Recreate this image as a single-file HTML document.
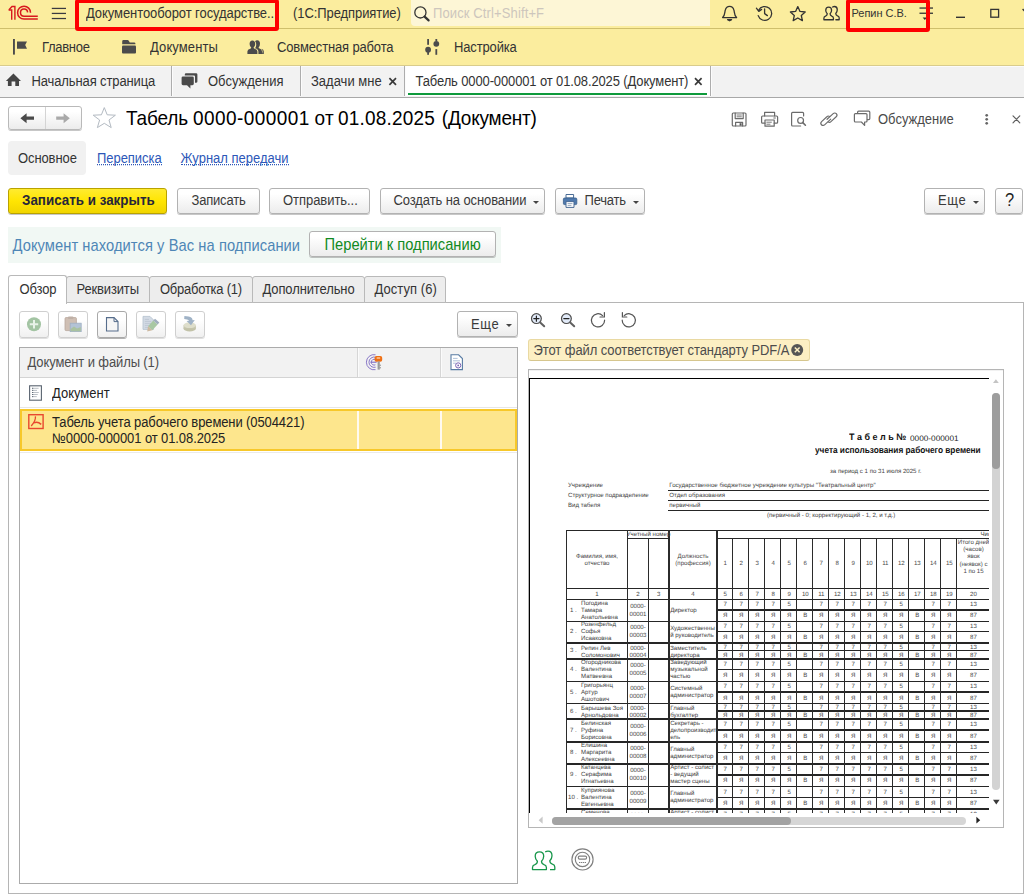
<!DOCTYPE html>
<html lang="ru">
<head>
<meta charset="utf-8">
<title>Табель 0000-000001 от 01.08.2025 (Документ)</title>
<style>
*{box-sizing:border-box;margin:0;padding:0}
html,body{width:1024px;height:894px;overflow:hidden;background:#fff}
body{font-family:"Liberation Sans",sans-serif;font-size:13px;color:#333;position:relative}
.abs{position:absolute}
svg{position:absolute;overflow:visible}
.t{position:absolute;white-space:nowrap;line-height:1;font-size:13px;transform:scaleY(1.07);transform-origin:0 84.6%}
#top{left:0;top:0;width:1024px;height:29px;background:#fbed9e;border-bottom:1px solid #cfbf6c}
#sec{left:0;top:29px;width:1024px;height:36.5px;background:#fbed9e;border-bottom:1px solid #d9cc8c}
#tabs{left:0;top:65.5px;width:1024px;height:32px;background:#f2f2f2;border-bottom:1.5px solid #a8a8a8;border-top:1px solid #fbfbfb}
.redbox{position:absolute;border:4px solid #fe0000;border-radius:3px}
#search{left:411px;top:0;width:299px;height:26px;background:#fdf6d6;border-radius:0 0 0 4px}
.tabsep{position:absolute;top:66px;width:2px;height:30px;background:linear-gradient(90deg,#adadad 50%,#fcfcfc 50%)}
#acttab{left:406px;top:66px;width:304px;height:30px;background:#fff}
#actline{left:408px;top:93px;width:299px;height:2px;background:#0f9a3c}
.btn{position:absolute;height:26px;border:1px solid #b2b2b2;border-radius:3px;background:linear-gradient(#ffffff 20%,#ececec);box-shadow:0 1px 0 rgba(0,0,0,.22)}
.btn .t{top:5.5px;color:#3a3a3a}
.ybtn{background:linear-gradient(#ffeb30,#ffe502 50%,#f1d500);border-color:#b9a200}
.ptab{position:absolute;top:275.5px;height:27.5px;border:1px solid #b9b9b9;background:#ededed;border-radius:3px 3px 0 0}
.ptab .t{top:6px;color:#333}
.sbtn{position:absolute;top:311px;width:30px;height:27px;border:1px solid #cfcfcf;border-radius:3px;background:linear-gradient(#fff 30%,#f0f0f0);box-shadow:0 1px 0 rgba(0,0,0,.12)}
.arr{position:absolute;width:0;height:0;border-left:3px solid transparent;border-right:3px solid transparent;border-top:3px solid #444}
/* pdf */
#page{left:529px;top:378px;width:460px;height:435px;overflow:hidden;background:#fff;text-rendering:geometricPrecision}
#page .p{position:absolute;white-space:nowrap;line-height:1;font-size:6.1px;color:#444}
#page .h{position:absolute;height:1px;background:#262626}
#page .v{position:absolute;width:1px;background:#2b2b2b}
#page .c{position:absolute;white-space:nowrap;line-height:1;font-size:6.1px;color:#484848;text-align:center;transform:translateX(-50%)}
</style>
</head>
<body>
<!-- ===== title bar ===== -->
<div id="top" class="abs"></div>
<div id="sec" class="abs"></div>
<div id="tabs" class="abs"></div>
<div id="search" class="abs"></div>

<!-- 1C logo -->
<svg style="left:0;top:0" width="80" height="29" viewBox="0 0 80 29">
 <g fill="none" stroke="#d8181e" stroke-width="1.4">
  <path d="M9 9.7 L12 6.5 H14.9 V19.8"/>
  <path d="M8.6 10 H11.7 V19.8"/>
  <path d="M30.5 12.7 A6.45 6.45 0 1 0 24.05 19.1 H37.8" stroke-width="1.5"/>
  <path d="M27.6 12.4 A3.55 3.55 0 1 0 24.05 16.2 H37.8" stroke-width="1.5"/>
 </g>
 <g fill="#3a3a40"><rect x="51.8" y="7.8" width="14.2" height="1.25"/><rect x="51.8" y="12.8" width="14.2" height="1.25"/><rect x="51.8" y="17.9" width="14.2" height="1.25"/></g>
</svg>
<div class="t" style="left:86px;top:7px;letter-spacing:-0.08px">Документооборот государстве..</div>
<div class="t" style="left:293px;top:7px;letter-spacing:-0.08px">(1С:Предприятие)</div>
<!-- search -->
<svg style="left:411px;top:0" width="24" height="28" viewBox="0 0 24 28">
 <circle cx="9.4" cy="12.4" r="5.6" fill="none" stroke="#333" stroke-width="1.3"/>
 <path d="M13.6 16.6 L17.6 20.4" stroke="#333" stroke-width="2.2" stroke-linecap="round"/>
</svg>
<div class="t" style="left:433px;top:7px;color:#cdc6bd;letter-spacing:0.12px">Поиск Ctrl+Shift+F</div>
<!-- right icons -->
<svg style="left:716px;top:0" width="130" height="29" viewBox="716 0 130 29" fill="none" stroke="#333" stroke-width="1.3" stroke-linejoin="round" stroke-linecap="round">
 <!-- bell -->
 <path d="M722.6 17.6 C725.2 15.6 724.6 12 725.3 10 C726 7.6 727.8 6.4 729.6 6.4 C731.4 6.4 733.2 7.6 733.9 10 C734.6 12 734 15.6 736.6 17.6 Z"/>
 <path d="M727.6 19.6 H731.6 L729.6 20.8 Z" fill="#333"/>
 <!-- history -->
 <path d="M758.6 10.4 A6.9 6.9 0 1 1 758.2 15.6"/>
 <path d="M756.4 8.2 L758.8 11.4 L761.6 9.4" />
 <path d="M764.6 9 V13.6 L767.4 15.6"/>
 <!-- star -->
 <path d="M797.8 6.6 L800 11.4 L805.2 12 L801.3 15.5 L802.4 20.6 L797.8 18 L793.2 20.6 L794.3 15.5 L790.4 12 L795.6 11.4 Z"/>
 <!-- people -->
 <g transform="translate(823.9 6.5) scale(0.685 0.715) translate(-532.5 -851.1)">
  <path vector-effect="non-scaling-stroke" d="M539.5 851.9 C542.2 851.9 543.7 853.9 543.7 856.3 C543.7 858.5 542.7 860.1 541.5 861.3 C541.5 863.2 542.4 864 544 864.6 C545.8 865.2 546.4 866 546.4 867.4 V869.6 H532.5 V867.4 C532.5 866 533.1 865.2 534.9 864.6 C536.5 864 537.4 863.2 537.4 861.3 C536.2 860.1 535.2 858.5 535.2 856.3 C535.2 853.9 536.8 851.9 539.5 851.9 Z"/>
  <path vector-effect="non-scaling-stroke" d="M545.2 851.8 C546.2 851.3 547.1 851.1 548 851.1 C550.6 851.1 552 853.1 552 855.7 C552 857.9 551 859.6 549.8 860.8 C549.8 862.8 550.8 863.6 552.4 864.2 C554.2 864.8 554.8 865.6 554.8 867 V869.6 H550"/>
 </g>
</svg>
<div class="t" style="left:851.5px;top:8px;font-size:11px;letter-spacing:-0.02px;color:#333">Репин С.В.</div>
<svg style="left:915px;top:0" width="109" height="29" viewBox="915 0 109 29">
 <g fill="#333"><rect x="919.5" y="7.4" width="13.5" height="1.3"/><rect x="919.5" y="12.6" width="13.5" height="1.3"/>
 <path d="M922.6 17.4 H927 L924.8 20 Z"/>
 <rect x="956" y="16.6" width="9" height="1.4"/></g>
 <rect x="990.8" y="9.4" width="7.8" height="7.8" fill="none" stroke="#333" stroke-width="1.3"/>
 <path d="M1022.6 9 L1030 17" stroke="#333" stroke-width="1.3"/>
</svg>
<div class="redbox" style="left:75px;top:-1px;width:204.3px;height:32.3px"></div>
<div class="redbox" style="left:846px;top:-1px;width:83.5px;height:33px"></div>

<!-- ===== sections ===== -->
<svg style="left:0;top:29px" width="520" height="37" viewBox="0 29 520 37" fill="#4b4b4b">
 <!-- flag -->
 <rect x="13" y="39" width="1.9" height="15.6"/>
 <path d="M17 41.4 H27 L25.2 45 L27 48.7 H17 Z"/>
 <!-- folder -->
 <path d="M122.2 44.2 V41.4 Q122.2 40.1 123.5 40.1 H127.6 Q128.4 40.1 128.9 40.9 L129.8 42.4 H134.2 Q135.4 42.4 135.4 43.4 V44.2 Z"/>
 <rect x="122" y="45.6" width="14" height="8" rx="1"/>
 <!-- people solid -->
 <path d="M250 54 H262 V51.4 Q262 49.4 259.6 48.6 Q258.6 48.2 258.6 47.4 Q260 46 260 43.8 Q260 40.2 257.2 40.2 Q255.8 40.2 255.1 41.2 Q256.4 42.6 256.2 45.2 Q256 47 255 48.2 Q258.4 49 258.4 51.6 V54 Z"/>
 <path d="M247.4 54 H257.4 V51.6 Q257.4 49.6 254.6 48.8 Q253.6 48.4 253.6 47.6 Q255.2 46.2 255.2 44 Q255.2 40.4 252.4 40.4 Q249.6 40.4 249.6 44 Q249.6 46.2 251.2 47.6 Q251.2 48.4 250.2 48.8 Q247.4 49.6 247.4 51.6 Z"/>
 <path d="M262 54 H263.8 V51.4 Q263.8 49.6 261.4 48.8 Q262.6 50 262.6 51.6 Z"/>
 <!-- sliders -->
 <rect x="427.2" y="39" width="1.8" height="5.8"/><circle cx="428.1" cy="49.7" r="2.9"/><rect x="427.2" y="52" width="1.8" height="2.8"/>
 <rect x="435.4" y="39" width="1.8" height="2"/><circle cx="436.3" cy="43.8" r="2.9"/><rect x="435.4" y="49.1" width="1.8" height="5.7"/>
</svg>
<div class="t" style="left:42px;top:41px;letter-spacing:-0.3px">Главное</div>
<div class="t" style="left:150px;top:41px;letter-spacing:0.1px">Документы</div>
<div class="t" style="left:277px;top:41px;letter-spacing:-0.15px">Совместная работа</div>
<div class="t" style="left:454px;top:41px;letter-spacing:-0.15px">Настройка</div>

<!-- ===== open tabs ===== -->
<div id="acttab" class="abs"></div>
<div id="actline" class="abs"></div>
<div class="tabsep" style="left:171px"></div>
<div class="tabsep" style="left:299.5px"></div>
<div class="tabsep" style="left:404px"></div>
<div class="tabsep" style="left:710px"></div>
<svg style="left:0;top:66px" width="720" height="31" viewBox="0 66 720 31">
 <!-- home -->
 <path d="M13.45 73.6 L21 80.9 H19 V86 H15.3 V81.4 H11.6 V86 H7.9 V80.9 H5.9 Z" fill="#454545"/>
 <!-- chat -->
 <path d="M186 73.2 H196 Q197.4 73.2 197.4 74.6 V81.4 Q197.4 82.8 196 82.8 H195 V76.4 Q195 75.4 194 75.4 H184.8 V74.6 Q184.8 73.2 186 73.2 Z" fill="#4a4a4a"/>
 <path d="M183 76.4 H192.4 Q193.8 76.4 193.8 77.8 V83.8 Q193.8 85.2 192.4 85.2 H190.4 V88.4 L187 85.2 H183 Q181.6 85.2 181.6 83.8 V77.8 Q181.6 76.4 183 76.4 Z" fill="#4a4a4a"/>
 <!-- close x -->
 <g stroke="#3a3a3a" stroke-width="1.7"><path d="M389.4 78.2 L396 84.8 M396 78.2 L389.4 84.8"/><path d="M695 78.2 L701.6 84.8 M701.6 78.2 L695 84.8"/></g>
</svg>
<div class="t" style="left:31.5px;top:74.5px;letter-spacing:-0.12px">Начальная страница</div>
<div class="t" style="left:208px;top:74.5px">Обсуждения</div>
<div class="t" style="left:311px;top:74.5px">Задачи мне</div>
<div class="t" style="left:415.5px;top:74.5px;letter-spacing:-0.13px">Табель 0000-000001 от 01.08.2025 (Документ)</div>
<!-- ===== form header ===== -->
<div class="btn" style="left:8px;top:106px;width:74px;height:24px;border-color:#b9b9b9"></div>
<div class="abs" style="left:45px;top:107px;width:1px;height:22px;background:#d4d4d4"></div>
<svg style="left:0;top:100px" width="130" height="36" viewBox="0 100 130 36">
 <path d="M20.4 118.2 L26.6 113.2 V116.6 H34 V119.8 H26.6 V123.2 Z" fill="#4a4a4a"/>
 <path d="M69.8 118.2 L63.6 113.2 V116.6 H56.2 V119.8 H63.6 V123.2 Z" fill="#a9a9a9"/>
 <path d="M104.3 107.6 L107.2 114.8 L115.4 115.2 L109 120 L111.2 127.6 L104.3 123.3 L97.4 127.6 L99.6 120 L93.2 115.2 L101.4 114.8 Z" fill="#fff" stroke="#b3bac2" stroke-width="1"/>
</svg>
<div class="t" style="left:126px;top:109px;font-size:19px;color:#000;letter-spacing:-0.15px">Табель</div>
<div class="t" style="left:193px;top:109px;font-size:19px;color:#000;letter-spacing:0.42px">0000-000001</div>
<div class="t" style="left:314.6px;top:109px;font-size:19px;color:#000;letter-spacing:0.3px">от</div>
<div class="t" style="left:338px;top:109px;font-size:19px;color:#000;letter-spacing:0.2px">01.08.2025</div>
<div class="t" style="left:441.8px;top:109px;font-size:19px;color:#000;letter-spacing:-0.2px">(Документ)</div>
<!-- header right icons -->
<svg style="left:725px;top:106px" width="300" height="26" viewBox="725 106 300 26" fill="none" stroke="#6b6b6b" stroke-width="1.2" stroke-linejoin="round" stroke-linecap="round">
 <!-- save -->
 <path d="M732.3 114 Q732.3 113 733.3 113 H745 Q746 113 746 114 V125 Q746 126 745 126 H733.3 Q732.3 126 732.3 125 Z"/>
 <path d="M735.2 113 V118.6 H743.2 V113"/><path d="M737 115 H741.4 M737 116.8 H741.4" stroke-width=".9"/>
 <path d="M735.6 126 V122.4 H742.6 V126"/><rect x="739.6" y="123.2" width="2" height="2.4" fill="#555" stroke="none"/>
 <!-- print -->
 <path d="M764.6 116 V112.4 H774.6 V116"/>
 <path d="M765 123.2 H762.6 Q761.6 123.2 761.6 122.2 V117 Q761.6 116 762.6 116 H776.6 Q777.6 116 777.6 117 V122.2 Q777.6 123.2 776.6 123.2 H774.2"/>
 <path d="M765 120 H774.2 V126.2 H765 Z"/><path d="M766.8 122.2 H771.4 M766.8 124.2 H770" stroke-width=".9"/>
 <path d="M773.8 118 H775.4" stroke-width="1"/>
 <!-- preview -->
 <path d="M800.6 126 H792.6 Q791.6 126 791.6 125 V113.4 Q791.6 112.4 792.6 112.4 H802.6 Q803.6 112.4 803.6 113.4 V116"/>
 <circle cx="800.6" cy="120.4" r="2.9"/><path d="M802.8 122.6 L805.4 125.2" stroke-width="1.6"/>
 <!-- link -->
 <g transform="translate(828.9 119.2) rotate(-43)" stroke-width="1.15"><path d="M1.4 1.2 H-7 A2.2 2.2 0 0 1 -7 -3.2 H0.2 A2.2 2.2 0 0 1 2.4 -1.6"/><path d="M-1.4 -1.2 H7 A2.2 2.2 0 0 1 7 3.2 H-0.2 A2.2 2.2 0 0 1 -2.4 1.6"/></g>
 <!-- discussion -->
 <path d="M857.6 113.4 V112.2 Q857.6 111.2 858.6 111.2 H868.8 Q869.8 111.2 869.8 112.2 V118.6 Q869.8 119.6 868.8 119.6 H867.4"/>
 <path d="M855.4 113.6 H866 Q867 113.6 867 114.6 V121 Q867 122 866 122 H864.6 V125.4 L861.4 122 H855.4 Q854.4 122 854.4 121 V114.6 Q854.4 113.6 855.4 113.6 Z"/>
 <!-- kebab -->
 <g fill="#666" stroke="none"><circle cx="986.7" cy="115.3" r="1.35"/><circle cx="986.7" cy="119.3" r="1.35"/><circle cx="986.7" cy="123.3" r="1.35"/></g>
 <path d="M1013 115.8 L1019.8 122.8 M1019.8 115.8 L1013 122.8" stroke="#5c5c5c" stroke-width="1.15"/>
</svg>
<div class="t" style="left:878px;top:113px;color:#4a4a4a">Обсуждение</div>

<div class="abs" style="left:8px;top:141px;width:78px;height:34px;background:#f1f1f1;border-radius:4px"></div>
<div class="t" style="left:18px;top:152px;color:#333;letter-spacing:-0.1px">Основное</div>
<div class="t" style="left:97px;top:152px;color:#2d57b8;letter-spacing:-0.05px;border-bottom:1px dotted #2d57b8;height:13px">Переписка</div>
<div class="t" style="left:180.5px;top:152px;color:#2d57b8;border-bottom:1px dotted #2d57b8;height:13px">Журнал передачи</div>

<!-- ===== command bar ===== -->
<div class="btn ybtn" style="left:8px;top:187.5px;width:159px;height:26px"><div class="t" style="left:13px;top:5.5px;font-weight:bold;color:#26263a;font-size:13.4px">Записать и закрыть</div></div>
<div class="btn" style="left:177px;top:187.5px;width:82.5px;height:26px"><div class="t" style="left:13.5px;letter-spacing:-0.2px">Записать</div></div>
<div class="btn" style="left:269px;top:187.5px;width:101px;height:26px"><div class="t" style="left:13px;letter-spacing:-0.05px">Отправить...</div></div>
<div class="btn" style="left:379.5px;top:187.5px;width:165.5px;height:26px"><div class="t" style="left:13px;letter-spacing:-0.1px">Создать на основании</div><div class="arr" style="left:152px;top:12px"></div></div>
<div class="btn" style="left:555px;top:187.5px;width:90px;height:26px"><div class="t" style="left:28.5px;letter-spacing:-0.2px">Печать</div><div class="arr" style="left:77px;top:12px"></div>
 <svg style="left:6px;top:4px" width="17" height="16" viewBox="0 0 17 16">
  <path d="M4 1.5 H11.6 V5 H4 Z" fill="#fff" stroke="#4a6c96" stroke-width="1"/>
  <rect x="1.4" y="5" width="13.4" height="6.6" rx="1.2" fill="#4f79ad" stroke="#3a5f8c" stroke-width=".8"/>
  <path d="M4 8.6 H12 V14.4 H4 Z" fill="#fff" stroke="#4a6c96" stroke-width="1"/>
  <path d="M5.6 10.6 H10.4 M5.6 12.4 H9.4" stroke="#7d93ad" stroke-width=".8"/>
 </svg>
</div>
<div class="btn" style="left:924px;top:187.5px;width:61px;height:26px"><div class="t" style="left:13px;letter-spacing:0.7px">Еще</div><div class="arr" style="left:47.5px;top:12px"></div></div>
<div class="btn" style="left:994.5px;top:187.5px;width:28.5px;height:26px"><div class="t" style="left:9.5px;top:3px;font-size:16.5px;color:#222">?</div></div>

<!-- ===== status ===== -->
<div class="abs" style="left:8px;top:227px;width:493px;height:36px;background:#f1f8f4"></div>
<div class="t" style="left:12.5px;top:238.5px;font-size:14.7px;color:#4e86b6;letter-spacing:0.07px">Документ находится у Вас на подписании</div>
<div class="btn" style="left:308.5px;top:231px;width:187px;height:26px"><div class="t" style="left:15px;top:5.5px;font-size:14.7px;color:#118a22">Перейти к подписанию</div></div>
<!-- ===== page tabs & panel ===== -->
<div class="abs" style="left:8px;top:302px;width:1016px;height:592px;border:1px solid #b5b5b5;background:#fff"></div>
<div class="ptab" style="left:66px;width:84px"><div class="t" style="left:9.5px;letter-spacing:-0.15px">Реквизиты</div></div>
<div class="ptab" style="left:149px;width:104px"><div class="t" style="left:10px;letter-spacing:-0.25px">Обработка (1)</div></div>
<div class="ptab" style="left:252px;width:113px"><div class="t" style="left:9.5px;letter-spacing:-0.12px">Дополнительно</div></div>
<div class="ptab" style="left:364px;width:82px"><div class="t" style="left:9.5px;letter-spacing:0.05px">Доступ (6)</div></div>
<div class="ptab" style="left:8px;top:275px;width:59px;height:29px;background:#fff;border-bottom:none"><div class="t" style="top:7px;left:10.5px;color:#333;letter-spacing:-0.15px">Обзор</div></div>

<!-- ===== left pane toolbar ===== -->
<div class="sbtn" style="left:19px;width:30px"></div>
<div class="sbtn" style="left:58px"></div>
<div class="sbtn" style="left:97px;border-color:#a9a9a9;box-shadow:0 1px 0 rgba(0,0,0,.3)"></div>
<div class="sbtn" style="left:136px"></div>
<div class="sbtn" style="left:175px"></div>
<svg style="left:19px;top:311px" width="190" height="27" viewBox="19 311 190 27">
 <!-- add -->
 <circle cx="34" cy="324.2" r="7" fill="#a3c4a3"/><path d="M34 320 V328.4 M29.8 324.2 H38.2" stroke="#e9f2e9" stroke-width="2"/>
 <!-- clipboard + picture -->
 <rect x="65" y="317.6" width="11.4" height="13" rx="1" fill="#cfbfb4" stroke="#b8a79c" stroke-width=".8"/>
 <rect x="68" y="316.4" width="5.4" height="2.6" rx=".8" fill="#bfb0a6"/>
 <rect x="70.2" y="323.2" width="11" height="8.4" fill="#b3c3d6" stroke="#9fb0c4" stroke-width=".8"/>
 <path d="M70.6 331.2 V329 L74 326.6 L77 328.6 L80.8 327 V331.2 Z" fill="#a9c2a0"/>
 <!-- new doc -->
 <path d="M106.5 317.6 H114 L118 321.6 V331 H106.5 Z" fill="#f6f6f6" stroke="#566d8c" stroke-width="1.1"/>
 <path d="M114 317.6 V321.6 H118" fill="none" stroke="#566d8c" stroke-width="1"/>
 <!-- doc + pencil -->
 <path d="M143 316.4 H150 L153.4 319.8 V329.4 H143 Z" fill="#d3dbe5" stroke="#b4c0ce" stroke-width=".8"/>
 <path d="M144.8 319.4 H149 M144.8 321.4 H151.4 M144.8 323.4 H151.4 M144.8 325.4 H149.6 M144.8 327.4 H148" stroke="#b7c2cf" stroke-width=".7"/>
 <path d="M148.05 326.35 L153.3 320.55 L157.6 324.45 L152.35 330.25 Z" fill="#a8c8a3"/>
 <path d="M153.3 320.55 L155.05 318.65 L159.35 322.55 L157.6 324.45 Z" fill="#9fadbd"/>
 <path d="M147.2 331.6 L148.05 326.35 L152.35 330.25 Z" fill="#cdb9a0"/>
 <!-- stamp -->
 <ellipse cx="189.7" cy="328.4" rx="6.2" ry="3" fill="#c2c2a8"/>
 <path d="M183.5 325.2 V328.4 H195.9 V325.2 Z" fill="#c8c8b0"/>
 <ellipse cx="189.7" cy="325.2" rx="6.2" ry="2.9" fill="#dedecb"/>
 <path d="M184.4 316 L188.6 316.6 Q192.4 317.2 192.6 320.2 L194.8 320 L191 325.2 L186.6 321 L189 320.8 Q188.8 319.6 187 319.4 L184.2 319 Z" fill="#9fb2c6"/>
</svg>
<div class="btn" style="left:457px;top:311px;width:61px;height:25.5px"><div class="t" style="left:13px;letter-spacing:0.7px">Еще</div><div class="arr" style="left:47.5px;top:12px"></div></div>

<!-- ===== list ===== -->
<div class="abs" style="left:19px;top:347px;width:499px;height:537px;border:1px solid #ababab;background:#fff"></div>
<div class="abs" style="left:20px;top:348px;width:497px;height:30px;background:#f2f2f2;border-bottom:1px solid #d4d4d4"></div>
<div class="abs" style="left:357px;top:348px;width:2px;height:29px;background:linear-gradient(90deg,#d6d6d6 50%,#fbfbfb 50%)"></div>
<div class="abs" style="left:440px;top:348px;width:2px;height:29px;background:linear-gradient(90deg,#d6d6d6 50%,#fbfbfb 50%)"></div>
<div class="t" style="left:27.5px;top:356px;color:#4d4d4d;letter-spacing:-0.12px">Документ и файлы (1)</div>
<div class="abs" style="left:20px;top:407px;width:497px;height:1px;background:#e6e6e6"></div>
<div class="abs" style="left:20px;top:451.5px;width:497px;height:1px;background:#ebebeb"></div>
<div class="t" style="left:52px;top:387px;color:#222">Документ</div>
<div class="abs" style="left:20px;top:409px;width:497px;height:42px;background:#fde68d;border:2px solid #f7c82a"></div>
<div class="abs" style="left:357px;top:411px;width:1.6px;height:38px;background:#fffaf0"></div>
<div class="abs" style="left:440px;top:411px;width:1.6px;height:38px;background:#fffaf0"></div>
<div class="t" style="left:52px;top:416px;color:#222;letter-spacing:-0.1px">Табель учета рабочего времени (0504421)</div>
<div class="t" style="left:52px;top:431.5px;color:#222;letter-spacing:-0.1px">№0000-000001 от 01.08.2025</div>
<svg style="left:20px;top:348px" width="497" height="110" viewBox="20 348 497 110">
 <!-- sign key icon -->
 <g fill="none" stroke="#7d6ac2" stroke-width="0.9">
  <path d="M375.5 354.75 A7.6 7.6 0 1 0 375.5 369.65"/>
  <path d="M375.6 357.2 A5.2 5.2 0 1 0 375.6 367.2"/>
  <path d="M375.4 359.6 A2.9 2.9 0 1 0 375.4 364.8"/>
  <path d="M370.6 362.2 H376.6" stroke-width="1.1"/>
 </g>
 <rect x="374.6" y="356" width="7.6" height="5.8" rx="1.8" fill="#ee6f14"/><rect x="376.6" y="357.3" width="3.6" height="1.5" rx=".6" fill="#ffc79a"/>
 <rect x="377.6" y="361.4" width="2.2" height="8.2" fill="#9a9a9a"/><rect x="379.6" y="364.6" width="1.2" height="1.4" fill="#9a9a9a"/><rect x="379.6" y="367" width="1.2" height="1.4" fill="#9a9a9a"/>
 <!-- doc seal icon -->
 <path d="M451 354.8 H458.6 L462.4 358.6 V369.6 H451 Z" fill="#fff" stroke="#587ba3" stroke-width="1.1"/>
 <path d="M453 358.4 H457.6 M453 360.8 H460 M453 363.2 H456" stroke="#9db2d0" stroke-width=".8"/>
 <circle cx="458.2" cy="365.4" r="2.6" fill="#fff" stroke="#7a62b4" stroke-width="1"/><circle cx="458.2" cy="365.4" r=".9" fill="#7a62b4"/>
 <!-- doc icon row1 -->
 <rect x="29.6" y="385.8" width="11.8" height="14.4" fill="#fff" stroke="#5a6470" stroke-width="1.1"/>
 <path d="M32 388.3 H38.6 M32 390.4 H37 M32 392.5 H38.8 M32 394.5 H37.8 M32 396.6 H36.8" stroke="#aab0b8" stroke-width=".8"/><path d="M32 388.3 H33.2 M32 390.4 H33.2 M32 392.5 H33.2 M32 394.5 H33.2 M32 396.6 H33.2" stroke="#5a6470" stroke-width=".9"/>
 <!-- pdf icon -->
 <rect x="28.8" y="414.7" width="14.3" height="13.8" fill="none" stroke="#e8482f" stroke-width="1.4"/>
 <path d="M35.4 416.4 C35.9 419.2 35 421.6 31.2 426" fill="none" stroke="#e8482f" stroke-width="1.3"/>
 <path d="M34 422.8 C36.4 421.8 39 422.4 41.2 424.4" fill="none" stroke="#e8482f" stroke-width="1.5"/>
</svg>
<!-- ===== right pane ===== -->
<svg style="left:528px;top:310px" width="120" height="22" viewBox="528 310 120 22" fill="none" stroke="#333" stroke-width="1.2" stroke-linecap="round">
 <circle cx="536.4" cy="318.6" r="4.9" fill="#e2ebf9" stroke="#4a4a4a"/><path d="M540.2 322.4 L544.2 326.2" stroke="#606060" stroke-width="2"/><path d="M533.8 318.6 H539 M536.4 316 V321.2" stroke="#222" stroke-width="1.2"/>
 <circle cx="566.4" cy="318.6" r="4.9" fill="#e2ebf9" stroke="#4a4a4a"/><path d="M570.2 322.4 L574.2 326.2" stroke="#606060" stroke-width="2"/><path d="M563.8 318.6 H569" stroke="#222" stroke-width="1.2"/>
 <path d="M602.6 315.6 A6.6 6.6 0 1 0 604.6 320.2" stroke="#555"/><path d="M604.4 312.6 V317 H600" stroke="#555"/>
 <path d="M624.2 315.6 A6.6 6.6 0 1 1 622.2 320.2" stroke="#555"/><path d="M622.4 312.6 V317 H626.8" stroke="#555"/>
</svg>
<div class="abs" style="left:528px;top:339px;width:282px;height:21.5px;background:#fcefc3;border:1px solid #e9d9a2;border-bottom-color:#d6c68e;border-radius:3px"></div>
<div class="t" style="left:533.5px;top:344px;color:#4c4c4c;letter-spacing:-0.08px;font-size:13px">Этот файл соответствует стандарту PDF/A</div>
<svg style="left:790px;top:343px" width="14" height="14" viewBox="0 0 14 14"><circle cx="7.2" cy="6.9" r="6" fill="#555"/><path d="M4.8 4.5 L9.6 9.3 M9.6 4.5 L4.8 9.3" stroke="#fcefc3" stroke-width="1.5"/></svg>

<div class="abs" style="left:528px;top:369px;width:476px;height:459px;border:1px solid #b5b5b5;background:#fff"></div>
<div class="abs" style="left:529px;top:370px;width:474px;height:1px;background:#f1f1f1"></div>
<!-- v scrollbar -->
<div class="abs" style="left:992px;top:393px;width:8px;height:397px;background:#d3d3d3;border-radius:4px"></div>
<div class="abs" style="left:992px;top:393px;width:8px;height:76px;background:#9d9d9d;border-radius:4px"></div>
<svg style="left:990px;top:377px" width="14" height="8" viewBox="0 0 14 8"><path d="M3 6 L5.9 2.2 L8.8 6 Z" fill="#c4c4c4"/></svg>
<svg style="left:990px;top:798px" width="14" height="8" viewBox="0 0 14 8"><path d="M3 1.8 H9.6 L6.3 6.4 Z" fill="#3a3a3a"/></svg>
<!-- h scrollbar -->
<div class="abs" style="left:552px;top:816.5px;width:414px;height:8px;background:#d6d6d6;border-radius:4px"></div>
<div class="abs" style="left:552px;top:816.5px;width:239px;height:8px;background:#a3a3a3;border-radius:4px"></div>
<svg style="left:536px;top:814px" width="10" height="12" viewBox="0 0 10 12"><path d="M6.6 2.6 L2.6 6.2 L6.6 9.8 Z" fill="#c9c9c9"/></svg>
<svg style="left:974px;top:814px" width="10" height="12" viewBox="0 0 10 12"><path d="M2.4 2.8 L6.2 6.2 L2.4 9.6 Z" fill="#222"/></svg>

<!-- bottom icons -->
<svg style="left:528px;top:846px" width="80" height="30" viewBox="528 846 80 30" fill="none">
 <g stroke="#17964a" stroke-width="1.3" stroke-linejoin="round">
  <path d="M539.5 851.9 C542.2 851.9 543.7 853.9 543.7 856.3 C543.7 858.5 542.7 860.1 541.5 861.3 C541.5 863.2 542.4 864 544 864.6 C545.8 865.2 546.4 866 546.4 867.4 V869.6 H532.5 V867.4 C532.5 866 533.1 865.2 534.9 864.6 C536.5 864 537.4 863.2 537.4 861.3 C536.2 860.1 535.2 858.5 535.2 856.3 C535.2 853.9 536.8 851.9 539.5 851.9 Z"/>
  <path d="M545.2 851.8 C546.2 851.3 547.1 851.1 548 851.1 C550.6 851.1 552 853.1 552 855.7 C552 857.9 551 859.6 549.8 860.8 C549.8 862.8 550.8 863.6 552.4 864.2 C554.2 864.8 554.8 865.6 554.8 867 V869.6 H550"/>
 </g>
 <g stroke="#808080" stroke-width="1.15">
  <circle cx="582.5" cy="859.4" r="10.6"/><circle cx="582.5" cy="859.4" r="7.2"/>
  <rect x="578.3" y="856.1" width="8.3" height="3.1" rx="1.4"/><path d="M579 862.5 H586" stroke-dasharray="1.4 .6"/>
 </g>
</svg>
<div id="page" class="abs">
<div class="abs" style="left:0;top:0;width:1.1px;height:435px;background:#000"></div>
<div class="abs" style="left:0;top:0;width:460px;height:1.4px;background:#000"></div>
<div class="p" style="left:319.8px;top:55.2px;font-size:9.3px;font-weight:bold;color:#111;transform:scaleX(.965);transform-origin:0 0">Т а б е л ь №</div>
<div class="p" style="left:381.2px;top:57.3px;font-size:8px;color:#222;transform:scaleX(1.03);transform-origin:0 0">0000-000001</div>
<div class="p" style="left:285.9px;top:68.1px;font-size:9.2px;font-weight:bold;color:#111;transform:scaleX(.901);transform-origin:0 0">учета использования рабочего времени</div>
<div class="p" style="left:301.0px;top:90.6px;">за период с 1 по 31 июля 2025 г.</div>
<div class="p" style="left:39.0px;top:105.4px;">Учреждение</div>
<div class="p" style="left:39.0px;top:115.2px;">Структурное подразделение</div>
<div class="p" style="left:39.0px;top:125.4px;">Вид табеля</div>
<div class="p" style="left:140.3px;top:105.4px;">Государственное бюджетное учреждение культуры "Театральный центр"</div>
<div class="p" style="left:140.3px;top:115.2px;">Отдел образования</div>
<div class="p" style="left:140.3px;top:125.4px;">первичный</div>
<div class="h" style="left:139.0px;top:111.6px;width:322.0px;height:1px;"></div>
<div class="h" style="left:139.0px;top:121.6px;width:322.0px;height:1px;"></div>
<div class="h" style="left:139.0px;top:131.6px;width:322.0px;height:1px;"></div>
<div class="p" style="left:238.0px;top:135.1px;">(первичный - 0; корректирующий - 1, 2, и т.д.)</div>
<div class="h" style="left:37.5px;top:151.6px;width:423.5px;height:1.5px;"></div>
<div class="h" style="left:98.5px;top:159.6px;width:41.5px;height:1.4px;"></div>
<div class="h" style="left:188.0px;top:159.6px;width:273.0px;height:1.4px;"></div>
<div class="h" style="left:37.5px;top:209.6px;width:423.5px;height:1.5px;"></div>
<div class="h" style="left:37.5px;top:220.6px;width:423.5px;height:1.5px;"></div>
<div class="h" style="left:37.5px;top:242.6px;width:423.5px;height:1.5px;"></div>
<div class="h" style="left:37.5px;top:264.2px;width:423.5px;height:1.5px;"></div>
<div class="h" style="left:37.5px;top:280.2px;width:423.5px;height:1.5px;"></div>
<div class="h" style="left:37.5px;top:302.6px;width:423.5px;height:1.5px;"></div>
<div class="h" style="left:37.5px;top:324.8px;width:423.5px;height:1.5px;"></div>
<div class="h" style="left:37.5px;top:340.4px;width:423.5px;height:1.5px;"></div>
<div class="h" style="left:37.5px;top:363.0px;width:423.5px;height:1.5px;"></div>
<div class="h" style="left:37.5px;top:385.2px;width:423.5px;height:1.5px;"></div>
<div class="h" style="left:37.5px;top:407.8px;width:423.5px;height:1.5px;"></div>
<div class="h" style="left:37.5px;top:430.0px;width:423.5px;height:1.5px;"></div>
<div class="h" style="left:37.5px;top:452.2px;width:423.5px;height:1.5px;"></div>
<div class="h" style="left:188.0px;top:231.3px;width:273.0px;height:1.4px;"></div>
<div class="h" style="left:188.0px;top:253.1px;width:273.0px;height:1.4px;"></div>
<div class="h" style="left:188.0px;top:271.9px;width:273.0px;height:1.4px;"></div>
<div class="h" style="left:188.0px;top:291.1px;width:273.0px;height:1.4px;"></div>
<div class="h" style="left:188.0px;top:313.4px;width:273.0px;height:1.4px;"></div>
<div class="h" style="left:188.0px;top:332.3px;width:273.0px;height:1.4px;"></div>
<div class="h" style="left:188.0px;top:351.4px;width:273.0px;height:1.4px;"></div>
<div class="h" style="left:188.0px;top:373.8px;width:273.0px;height:1.4px;"></div>
<div class="h" style="left:188.0px;top:396.2px;width:273.0px;height:1.4px;"></div>
<div class="h" style="left:188.0px;top:418.6px;width:273.0px;height:1.4px;"></div>
<div class="h" style="left:188.0px;top:440.8px;width:273.0px;height:1.4px;"></div>
<div class="v" style="left:36.9px;top:152.0px;height:305.0px;width:1.1px;"></div>
<div class="v" style="left:97.9px;top:152.0px;height:305.0px;width:1.3px;"></div>
<div class="v" style="left:118.6px;top:160.0px;height:297.0px;width:1.1px;"></div>
<div class="v" style="left:139.4px;top:152.0px;height:305.0px;width:1.3px;"></div>
<div class="v" style="left:187.4px;top:152.0px;height:305.0px;width:1.3px;"></div>
<div class="v" style="left:203.4px;top:160.0px;height:297.0px;width:1.1px;"></div>
<div class="v" style="left:219.4px;top:160.0px;height:297.0px;width:1.1px;"></div>
<div class="v" style="left:235.4px;top:160.0px;height:297.0px;width:1.1px;"></div>
<div class="v" style="left:251.4px;top:160.0px;height:297.0px;width:1.1px;"></div>
<div class="v" style="left:267.4px;top:160.0px;height:297.0px;width:1.1px;"></div>
<div class="v" style="left:283.4px;top:160.0px;height:297.0px;width:1.1px;"></div>
<div class="v" style="left:299.4px;top:160.0px;height:297.0px;width:1.1px;"></div>
<div class="v" style="left:315.4px;top:160.0px;height:297.0px;width:1.1px;"></div>
<div class="v" style="left:331.4px;top:160.0px;height:297.0px;width:1.1px;"></div>
<div class="v" style="left:347.4px;top:160.0px;height:297.0px;width:1.1px;"></div>
<div class="v" style="left:363.4px;top:160.0px;height:297.0px;width:1.1px;"></div>
<div class="v" style="left:379.4px;top:160.0px;height:297.0px;width:1.1px;"></div>
<div class="v" style="left:395.4px;top:160.0px;height:297.0px;width:1.1px;"></div>
<div class="v" style="left:411.4px;top:160.0px;height:297.0px;width:1.1px;"></div>
<div class="v" style="left:427.4px;top:160.0px;height:297.0px;width:1.1px;"></div>
<div class="c" style="left:68.0px;top:175.5px;">Фамилия, имя,</div>
<div class="c" style="left:68.0px;top:182.5px;">отчество</div>
<div class="c" style="left:119.5px;top:153.5px;">Учетный номер</div>
<div class="c" style="left:164.0px;top:175.5px;">Должность</div>
<div class="c" style="left:164.0px;top:182.5px;">(профессия)</div>
<div class="p" style="left:451.5px;top:153.5px;">Числа месяца</div>
<div class="c" style="left:196.3px;top:182.5px;">1</div>
<div class="c" style="left:212.3px;top:182.5px;">2</div>
<div class="c" style="left:228.3px;top:182.5px;">3</div>
<div class="c" style="left:244.3px;top:182.5px;">4</div>
<div class="c" style="left:260.3px;top:182.5px;">5</div>
<div class="c" style="left:276.3px;top:182.5px;">6</div>
<div class="c" style="left:292.3px;top:182.5px;">7</div>
<div class="c" style="left:308.3px;top:182.5px;">8</div>
<div class="c" style="left:324.3px;top:182.5px;">9</div>
<div class="c" style="left:340.3px;top:182.5px;">10</div>
<div class="c" style="left:356.3px;top:182.5px;">11</div>
<div class="c" style="left:372.3px;top:182.5px;">12</div>
<div class="c" style="left:388.3px;top:182.5px;">13</div>
<div class="c" style="left:404.3px;top:182.5px;">14</div>
<div class="c" style="left:420.3px;top:182.5px;">15</div>
<div class="c" style="left:444.5px;top:162.1px;">Итого дней</div>
<div class="c" style="left:444.5px;top:169.2px;">(часов)</div>
<div class="c" style="left:444.5px;top:176.4px;">явок</div>
<div class="c" style="left:444.5px;top:183.5px;">(неявок) с</div>
<div class="c" style="left:444.5px;top:190.7px;">1 по 15</div>
<div class="c" style="left:68.0px;top:214.0px;">1</div>
<div class="c" style="left:109.0px;top:214.0px;">2</div>
<div class="c" style="left:129.7px;top:214.0px;">3</div>
<div class="c" style="left:164.0px;top:214.0px;">4</div>
<div class="c" style="left:196.3px;top:214.0px;">5</div>
<div class="c" style="left:212.3px;top:214.0px;">6</div>
<div class="c" style="left:228.3px;top:214.0px;">7</div>
<div class="c" style="left:244.3px;top:214.0px;">8</div>
<div class="c" style="left:260.3px;top:214.0px;">9</div>
<div class="c" style="left:276.3px;top:214.0px;">10</div>
<div class="c" style="left:292.3px;top:214.0px;">11</div>
<div class="c" style="left:308.3px;top:214.0px;">12</div>
<div class="c" style="left:324.3px;top:214.0px;">13</div>
<div class="c" style="left:340.3px;top:214.0px;">14</div>
<div class="c" style="left:356.3px;top:214.0px;">15</div>
<div class="c" style="left:372.3px;top:214.0px;">16</div>
<div class="c" style="left:388.3px;top:214.0px;">17</div>
<div class="c" style="left:404.3px;top:214.0px;">18</div>
<div class="c" style="left:420.3px;top:214.0px;">19</div>
<div class="c" style="left:444.5px;top:214.0px;">20</div>
<div class="p" style="left:41.0px;top:229.5px;">1 .</div>
<div class="p" style="left:52.0px;top:222.5px;">Погодина</div>
<div class="p" style="left:52.0px;top:229.5px;">Тамара</div>
<div class="p" style="left:52.0px;top:236.5px;">Анатольевна</div>
<div class="c" style="left:109.0px;top:225.5px;">0000-</div>
<div class="c" style="left:109.0px;top:233.5px;">00001</div>
<div class="p" style="left:141.2px;top:229.5px;">Директор</div>
<div class="c" style="left:196.3px;top:224.4px;">7</div>
<div class="c" style="left:196.3px;top:235.4px;">Я</div>
<div class="c" style="left:212.3px;top:224.4px;">7</div>
<div class="c" style="left:212.3px;top:235.4px;">Я</div>
<div class="c" style="left:228.3px;top:224.4px;">7</div>
<div class="c" style="left:228.3px;top:235.4px;">Я</div>
<div class="c" style="left:244.3px;top:224.4px;">7</div>
<div class="c" style="left:244.3px;top:235.4px;">Я</div>
<div class="c" style="left:260.3px;top:224.4px;">5</div>
<div class="c" style="left:260.3px;top:235.4px;">Я</div>
<div class="c" style="left:276.3px;top:235.4px;">В</div>
<div class="c" style="left:292.3px;top:224.4px;">7</div>
<div class="c" style="left:292.3px;top:235.4px;">Я</div>
<div class="c" style="left:308.3px;top:224.4px;">7</div>
<div class="c" style="left:308.3px;top:235.4px;">Я</div>
<div class="c" style="left:324.3px;top:224.4px;">7</div>
<div class="c" style="left:324.3px;top:235.4px;">Я</div>
<div class="c" style="left:340.3px;top:224.4px;">7</div>
<div class="c" style="left:340.3px;top:235.4px;">Я</div>
<div class="c" style="left:356.3px;top:224.4px;">7</div>
<div class="c" style="left:356.3px;top:235.4px;">Я</div>
<div class="c" style="left:372.3px;top:224.4px;">5</div>
<div class="c" style="left:372.3px;top:235.4px;">Я</div>
<div class="c" style="left:388.3px;top:235.4px;">В</div>
<div class="c" style="left:404.3px;top:224.4px;">7</div>
<div class="c" style="left:404.3px;top:235.4px;">Я</div>
<div class="c" style="left:420.3px;top:224.4px;">7</div>
<div class="c" style="left:420.3px;top:235.4px;">Я</div>
<div class="c" style="left:444.5px;top:224.4px;">13</div>
<div class="c" style="left:444.5px;top:235.4px;">87</div>
<div class="p" style="left:41.0px;top:251.2px;">2 .</div>
<div class="p" style="left:52.0px;top:244.2px;">Розенфельд</div>
<div class="p" style="left:52.0px;top:251.2px;">Софья</div>
<div class="p" style="left:52.0px;top:258.2px;">Исааковна</div>
<div class="c" style="left:109.0px;top:247.2px;">0000-</div>
<div class="c" style="left:109.0px;top:255.2px;">00003</div>
<div class="p" style="left:141.2px;top:247.8px;">Художественны</div>
<div class="p" style="left:141.2px;top:254.8px;">й руководитель</div>
<div class="c" style="left:196.3px;top:246.2px;">7</div>
<div class="c" style="left:196.3px;top:257.1px;">Я</div>
<div class="c" style="left:212.3px;top:246.2px;">7</div>
<div class="c" style="left:212.3px;top:257.1px;">Я</div>
<div class="c" style="left:228.3px;top:246.2px;">7</div>
<div class="c" style="left:228.3px;top:257.1px;">Я</div>
<div class="c" style="left:244.3px;top:246.2px;">7</div>
<div class="c" style="left:244.3px;top:257.1px;">Я</div>
<div class="c" style="left:260.3px;top:246.2px;">5</div>
<div class="c" style="left:260.3px;top:257.1px;">Я</div>
<div class="c" style="left:276.3px;top:257.1px;">В</div>
<div class="c" style="left:292.3px;top:246.2px;">7</div>
<div class="c" style="left:292.3px;top:257.1px;">Я</div>
<div class="c" style="left:308.3px;top:246.2px;">7</div>
<div class="c" style="left:308.3px;top:257.1px;">Я</div>
<div class="c" style="left:324.3px;top:246.2px;">7</div>
<div class="c" style="left:324.3px;top:257.1px;">Я</div>
<div class="c" style="left:340.3px;top:246.2px;">7</div>
<div class="c" style="left:340.3px;top:257.1px;">Я</div>
<div class="c" style="left:356.3px;top:246.2px;">7</div>
<div class="c" style="left:356.3px;top:257.1px;">Я</div>
<div class="c" style="left:372.3px;top:246.2px;">5</div>
<div class="c" style="left:372.3px;top:257.1px;">Я</div>
<div class="c" style="left:388.3px;top:257.1px;">В</div>
<div class="c" style="left:404.3px;top:246.2px;">7</div>
<div class="c" style="left:404.3px;top:257.1px;">Я</div>
<div class="c" style="left:420.3px;top:246.2px;">7</div>
<div class="c" style="left:420.3px;top:257.1px;">Я</div>
<div class="c" style="left:444.5px;top:246.2px;">13</div>
<div class="c" style="left:444.5px;top:257.1px;">87</div>
<div class="p" style="left:41.0px;top:270.1px;">3 .</div>
<div class="p" style="left:52.0px;top:267.8px;">Репин Лев</div>
<div class="p" style="left:52.0px;top:274.6px;">Соломонович</div>
<div class="c" style="left:109.0px;top:267.8px;">0000-</div>
<div class="c" style="left:109.0px;top:274.6px;">00004</div>
<div class="p" style="left:141.2px;top:267.8px;">Заместитель</div>
<div class="p" style="left:141.2px;top:274.6px;">директора</div>
<div class="c" style="left:196.3px;top:266.5px;">7</div>
<div class="c" style="left:196.3px;top:274.5px;">Я</div>
<div class="c" style="left:212.3px;top:266.5px;">7</div>
<div class="c" style="left:212.3px;top:274.5px;">Я</div>
<div class="c" style="left:228.3px;top:266.5px;">7</div>
<div class="c" style="left:228.3px;top:274.5px;">Я</div>
<div class="c" style="left:244.3px;top:266.5px;">7</div>
<div class="c" style="left:244.3px;top:274.5px;">Я</div>
<div class="c" style="left:260.3px;top:266.5px;">5</div>
<div class="c" style="left:260.3px;top:274.5px;">Я</div>
<div class="c" style="left:276.3px;top:274.5px;">В</div>
<div class="c" style="left:292.3px;top:266.5px;">7</div>
<div class="c" style="left:292.3px;top:274.5px;">Я</div>
<div class="c" style="left:308.3px;top:266.5px;">7</div>
<div class="c" style="left:308.3px;top:274.5px;">Я</div>
<div class="c" style="left:324.3px;top:266.5px;">7</div>
<div class="c" style="left:324.3px;top:274.5px;">Я</div>
<div class="c" style="left:340.3px;top:266.5px;">7</div>
<div class="c" style="left:340.3px;top:274.5px;">Я</div>
<div class="c" style="left:356.3px;top:266.5px;">7</div>
<div class="c" style="left:356.3px;top:274.5px;">Я</div>
<div class="c" style="left:372.3px;top:266.5px;">5</div>
<div class="c" style="left:372.3px;top:274.5px;">Я</div>
<div class="c" style="left:388.3px;top:274.5px;">В</div>
<div class="c" style="left:404.3px;top:266.5px;">7</div>
<div class="c" style="left:404.3px;top:274.5px;">Я</div>
<div class="c" style="left:420.3px;top:266.5px;">7</div>
<div class="c" style="left:420.3px;top:274.5px;">Я</div>
<div class="c" style="left:444.5px;top:266.5px;">13</div>
<div class="c" style="left:444.5px;top:274.5px;">87</div>
<div class="p" style="left:41.0px;top:289.2px;">4 .</div>
<div class="p" style="left:52.0px;top:282.2px;">Огородникова</div>
<div class="p" style="left:52.0px;top:289.2px;">Валентина</div>
<div class="p" style="left:52.0px;top:296.2px;">Матвеевна</div>
<div class="c" style="left:109.0px;top:285.2px;">0000-</div>
<div class="c" style="left:109.0px;top:293.2px;">00005</div>
<div class="p" style="left:141.2px;top:282.2px;">Заведующий</div>
<div class="p" style="left:141.2px;top:289.2px;">музыкальной</div>
<div class="p" style="left:141.2px;top:296.2px;">частью</div>
<div class="c" style="left:196.3px;top:284.1px;">7</div>
<div class="c" style="left:196.3px;top:295.2px;">Я</div>
<div class="c" style="left:212.3px;top:284.1px;">7</div>
<div class="c" style="left:212.3px;top:295.2px;">Я</div>
<div class="c" style="left:228.3px;top:284.1px;">7</div>
<div class="c" style="left:228.3px;top:295.2px;">Я</div>
<div class="c" style="left:244.3px;top:284.1px;">7</div>
<div class="c" style="left:244.3px;top:295.2px;">Я</div>
<div class="c" style="left:260.3px;top:284.1px;">5</div>
<div class="c" style="left:260.3px;top:295.2px;">Я</div>
<div class="c" style="left:276.3px;top:295.2px;">В</div>
<div class="c" style="left:292.3px;top:284.1px;">7</div>
<div class="c" style="left:292.3px;top:295.2px;">Я</div>
<div class="c" style="left:308.3px;top:284.1px;">7</div>
<div class="c" style="left:308.3px;top:295.2px;">Я</div>
<div class="c" style="left:324.3px;top:284.1px;">7</div>
<div class="c" style="left:324.3px;top:295.2px;">Я</div>
<div class="c" style="left:340.3px;top:284.1px;">7</div>
<div class="c" style="left:340.3px;top:295.2px;">Я</div>
<div class="c" style="left:356.3px;top:284.1px;">7</div>
<div class="c" style="left:356.3px;top:295.2px;">Я</div>
<div class="c" style="left:372.3px;top:284.1px;">5</div>
<div class="c" style="left:372.3px;top:295.2px;">Я</div>
<div class="c" style="left:388.3px;top:295.2px;">В</div>
<div class="c" style="left:404.3px;top:284.1px;">7</div>
<div class="c" style="left:404.3px;top:295.2px;">Я</div>
<div class="c" style="left:420.3px;top:284.1px;">7</div>
<div class="c" style="left:420.3px;top:295.2px;">Я</div>
<div class="c" style="left:444.5px;top:284.1px;">13</div>
<div class="c" style="left:444.5px;top:295.2px;">87</div>
<div class="p" style="left:41.0px;top:311.6px;">5 .</div>
<div class="p" style="left:52.0px;top:304.6px;">Григорьянц</div>
<div class="p" style="left:52.0px;top:311.6px;">Артур</div>
<div class="p" style="left:52.0px;top:318.6px;">Ашотович</div>
<div class="c" style="left:109.0px;top:307.6px;">0000-</div>
<div class="c" style="left:109.0px;top:315.6px;">00007</div>
<div class="p" style="left:141.2px;top:308.1px;">Системный</div>
<div class="p" style="left:141.2px;top:315.1px;">администратор</div>
<div class="c" style="left:196.3px;top:306.4px;">7</div>
<div class="c" style="left:196.3px;top:317.5px;">Я</div>
<div class="c" style="left:212.3px;top:306.4px;">7</div>
<div class="c" style="left:212.3px;top:317.5px;">Я</div>
<div class="c" style="left:228.3px;top:306.4px;">7</div>
<div class="c" style="left:228.3px;top:317.5px;">Я</div>
<div class="c" style="left:244.3px;top:306.4px;">7</div>
<div class="c" style="left:244.3px;top:317.5px;">Я</div>
<div class="c" style="left:260.3px;top:306.4px;">5</div>
<div class="c" style="left:260.3px;top:317.5px;">Я</div>
<div class="c" style="left:276.3px;top:317.5px;">В</div>
<div class="c" style="left:292.3px;top:306.4px;">7</div>
<div class="c" style="left:292.3px;top:317.5px;">Я</div>
<div class="c" style="left:308.3px;top:306.4px;">7</div>
<div class="c" style="left:308.3px;top:317.5px;">Я</div>
<div class="c" style="left:324.3px;top:306.4px;">7</div>
<div class="c" style="left:324.3px;top:317.5px;">Я</div>
<div class="c" style="left:340.3px;top:306.4px;">7</div>
<div class="c" style="left:340.3px;top:317.5px;">Я</div>
<div class="c" style="left:356.3px;top:306.4px;">7</div>
<div class="c" style="left:356.3px;top:317.5px;">Я</div>
<div class="c" style="left:372.3px;top:306.4px;">5</div>
<div class="c" style="left:372.3px;top:317.5px;">Я</div>
<div class="c" style="left:388.3px;top:317.5px;">В</div>
<div class="c" style="left:404.3px;top:306.4px;">7</div>
<div class="c" style="left:404.3px;top:317.5px;">Я</div>
<div class="c" style="left:420.3px;top:306.4px;">7</div>
<div class="c" style="left:420.3px;top:317.5px;">Я</div>
<div class="c" style="left:444.5px;top:306.4px;">13</div>
<div class="c" style="left:444.5px;top:317.5px;">87</div>
<div class="p" style="left:41.0px;top:330.5px;">6 .</div>
<div class="p" style="left:52.0px;top:328.4px;">Барышева Зоя</div>
<div class="p" style="left:52.0px;top:335.2px;">Арнольдовна</div>
<div class="c" style="left:109.0px;top:328.4px;">0000-</div>
<div class="c" style="left:109.0px;top:335.2px;">00002</div>
<div class="p" style="left:141.2px;top:328.4px;">Главный</div>
<div class="p" style="left:141.2px;top:335.2px;">бухгалтер</div>
<div class="c" style="left:196.3px;top:327.0px;">7</div>
<div class="c" style="left:196.3px;top:334.8px;">Я</div>
<div class="c" style="left:212.3px;top:327.0px;">7</div>
<div class="c" style="left:212.3px;top:334.8px;">Я</div>
<div class="c" style="left:228.3px;top:327.0px;">7</div>
<div class="c" style="left:228.3px;top:334.8px;">Я</div>
<div class="c" style="left:244.3px;top:327.0px;">7</div>
<div class="c" style="left:244.3px;top:334.8px;">Я</div>
<div class="c" style="left:260.3px;top:327.0px;">5</div>
<div class="c" style="left:260.3px;top:334.8px;">Я</div>
<div class="c" style="left:276.3px;top:334.8px;">В</div>
<div class="c" style="left:292.3px;top:327.0px;">7</div>
<div class="c" style="left:292.3px;top:334.8px;">Я</div>
<div class="c" style="left:308.3px;top:327.0px;">7</div>
<div class="c" style="left:308.3px;top:334.8px;">Я</div>
<div class="c" style="left:324.3px;top:327.0px;">7</div>
<div class="c" style="left:324.3px;top:334.8px;">Я</div>
<div class="c" style="left:340.3px;top:327.0px;">7</div>
<div class="c" style="left:340.3px;top:334.8px;">Я</div>
<div class="c" style="left:356.3px;top:327.0px;">7</div>
<div class="c" style="left:356.3px;top:334.8px;">Я</div>
<div class="c" style="left:372.3px;top:327.0px;">5</div>
<div class="c" style="left:372.3px;top:334.8px;">Я</div>
<div class="c" style="left:388.3px;top:334.8px;">В</div>
<div class="c" style="left:404.3px;top:327.0px;">7</div>
<div class="c" style="left:404.3px;top:334.8px;">Я</div>
<div class="c" style="left:420.3px;top:327.0px;">7</div>
<div class="c" style="left:420.3px;top:334.8px;">Я</div>
<div class="c" style="left:444.5px;top:327.0px;">13</div>
<div class="c" style="left:444.5px;top:334.8px;">87</div>
<div class="p" style="left:41.0px;top:349.5px;">7 .</div>
<div class="p" style="left:52.0px;top:342.5px;">Белинская</div>
<div class="p" style="left:52.0px;top:349.5px;">Руфина</div>
<div class="p" style="left:52.0px;top:356.5px;">Борисовна</div>
<div class="c" style="left:109.0px;top:345.5px;">0000-</div>
<div class="c" style="left:109.0px;top:353.5px;">00006</div>
<div class="p" style="left:141.2px;top:342.5px;">Секретарь -</div>
<div class="p" style="left:141.2px;top:349.5px;">делопроизводит</div>
<div class="p" style="left:141.2px;top:356.5px;">ель</div>
<div class="c" style="left:196.3px;top:344.3px;">7</div>
<div class="c" style="left:196.3px;top:355.6px;">Я</div>
<div class="c" style="left:212.3px;top:344.3px;">7</div>
<div class="c" style="left:212.3px;top:355.6px;">Я</div>
<div class="c" style="left:228.3px;top:344.3px;">7</div>
<div class="c" style="left:228.3px;top:355.6px;">Я</div>
<div class="c" style="left:244.3px;top:344.3px;">7</div>
<div class="c" style="left:244.3px;top:355.6px;">Я</div>
<div class="c" style="left:260.3px;top:344.3px;">5</div>
<div class="c" style="left:260.3px;top:355.6px;">Я</div>
<div class="c" style="left:276.3px;top:355.6px;">В</div>
<div class="c" style="left:292.3px;top:344.3px;">7</div>
<div class="c" style="left:292.3px;top:355.6px;">Я</div>
<div class="c" style="left:308.3px;top:344.3px;">7</div>
<div class="c" style="left:308.3px;top:355.6px;">Я</div>
<div class="c" style="left:324.3px;top:344.3px;">7</div>
<div class="c" style="left:324.3px;top:355.6px;">Я</div>
<div class="c" style="left:340.3px;top:344.3px;">7</div>
<div class="c" style="left:340.3px;top:355.6px;">Я</div>
<div class="c" style="left:356.3px;top:344.3px;">7</div>
<div class="c" style="left:356.3px;top:355.6px;">Я</div>
<div class="c" style="left:372.3px;top:344.3px;">5</div>
<div class="c" style="left:372.3px;top:355.6px;">Я</div>
<div class="c" style="left:388.3px;top:355.6px;">В</div>
<div class="c" style="left:404.3px;top:344.3px;">7</div>
<div class="c" style="left:404.3px;top:355.6px;">Я</div>
<div class="c" style="left:420.3px;top:344.3px;">7</div>
<div class="c" style="left:420.3px;top:355.6px;">Я</div>
<div class="c" style="left:444.5px;top:344.3px;">13</div>
<div class="c" style="left:444.5px;top:355.6px;">87</div>
<div class="p" style="left:41.0px;top:372.0px;">8 .</div>
<div class="p" style="left:52.0px;top:365.0px;">Елишина</div>
<div class="p" style="left:52.0px;top:372.0px;">Маргарита</div>
<div class="p" style="left:52.0px;top:379.0px;">Алексеевна</div>
<div class="c" style="left:109.0px;top:368.0px;">0000-</div>
<div class="c" style="left:109.0px;top:376.0px;">00008</div>
<div class="p" style="left:141.2px;top:368.5px;">Главный</div>
<div class="p" style="left:141.2px;top:375.5px;">администратор</div>
<div class="c" style="left:196.3px;top:366.8px;">7</div>
<div class="c" style="left:196.3px;top:377.9px;">Я</div>
<div class="c" style="left:212.3px;top:366.8px;">7</div>
<div class="c" style="left:212.3px;top:377.9px;">Я</div>
<div class="c" style="left:228.3px;top:366.8px;">7</div>
<div class="c" style="left:228.3px;top:377.9px;">Я</div>
<div class="c" style="left:244.3px;top:366.8px;">7</div>
<div class="c" style="left:244.3px;top:377.9px;">Я</div>
<div class="c" style="left:260.3px;top:366.8px;">5</div>
<div class="c" style="left:260.3px;top:377.9px;">Я</div>
<div class="c" style="left:276.3px;top:377.9px;">В</div>
<div class="c" style="left:292.3px;top:366.8px;">7</div>
<div class="c" style="left:292.3px;top:377.9px;">Я</div>
<div class="c" style="left:308.3px;top:366.8px;">7</div>
<div class="c" style="left:308.3px;top:377.9px;">Я</div>
<div class="c" style="left:324.3px;top:366.8px;">7</div>
<div class="c" style="left:324.3px;top:377.9px;">Я</div>
<div class="c" style="left:340.3px;top:366.8px;">7</div>
<div class="c" style="left:340.3px;top:377.9px;">Я</div>
<div class="c" style="left:356.3px;top:366.8px;">7</div>
<div class="c" style="left:356.3px;top:377.9px;">Я</div>
<div class="c" style="left:372.3px;top:366.8px;">5</div>
<div class="c" style="left:372.3px;top:377.9px;">Я</div>
<div class="c" style="left:388.3px;top:377.9px;">В</div>
<div class="c" style="left:404.3px;top:366.8px;">7</div>
<div class="c" style="left:404.3px;top:377.9px;">Я</div>
<div class="c" style="left:420.3px;top:366.8px;">7</div>
<div class="c" style="left:420.3px;top:377.9px;">Я</div>
<div class="c" style="left:444.5px;top:366.8px;">13</div>
<div class="c" style="left:444.5px;top:377.9px;">87</div>
<div class="p" style="left:41.0px;top:394.4px;">9 .</div>
<div class="p" style="left:52.0px;top:387.4px;">Катанцева</div>
<div class="p" style="left:52.0px;top:394.4px;">Серафима</div>
<div class="p" style="left:52.0px;top:401.4px;">Игнатьевна</div>
<div class="c" style="left:109.0px;top:390.4px;">0000-</div>
<div class="c" style="left:109.0px;top:398.4px;">00010</div>
<div class="p" style="left:141.2px;top:387.4px;">Артист - солист</div>
<div class="p" style="left:141.2px;top:394.4px;">- ведущий</div>
<div class="p" style="left:141.2px;top:401.4px;">мастер сцены</div>
<div class="c" style="left:196.3px;top:389.1px;">7</div>
<div class="c" style="left:196.3px;top:400.4px;">Я</div>
<div class="c" style="left:212.3px;top:389.1px;">7</div>
<div class="c" style="left:212.3px;top:400.4px;">Я</div>
<div class="c" style="left:228.3px;top:389.1px;">7</div>
<div class="c" style="left:228.3px;top:400.4px;">Я</div>
<div class="c" style="left:244.3px;top:389.1px;">7</div>
<div class="c" style="left:244.3px;top:400.4px;">Я</div>
<div class="c" style="left:260.3px;top:389.1px;">5</div>
<div class="c" style="left:260.3px;top:400.4px;">Я</div>
<div class="c" style="left:276.3px;top:400.4px;">В</div>
<div class="c" style="left:292.3px;top:389.1px;">7</div>
<div class="c" style="left:292.3px;top:400.4px;">Я</div>
<div class="c" style="left:308.3px;top:389.1px;">7</div>
<div class="c" style="left:308.3px;top:400.4px;">Я</div>
<div class="c" style="left:324.3px;top:389.1px;">7</div>
<div class="c" style="left:324.3px;top:400.4px;">Я</div>
<div class="c" style="left:340.3px;top:389.1px;">7</div>
<div class="c" style="left:340.3px;top:400.4px;">Я</div>
<div class="c" style="left:356.3px;top:389.1px;">7</div>
<div class="c" style="left:356.3px;top:400.4px;">Я</div>
<div class="c" style="left:372.3px;top:389.1px;">5</div>
<div class="c" style="left:372.3px;top:400.4px;">Я</div>
<div class="c" style="left:388.3px;top:400.4px;">В</div>
<div class="c" style="left:404.3px;top:389.1px;">7</div>
<div class="c" style="left:404.3px;top:400.4px;">Я</div>
<div class="c" style="left:420.3px;top:389.1px;">7</div>
<div class="c" style="left:420.3px;top:400.4px;">Я</div>
<div class="c" style="left:444.5px;top:389.1px;">13</div>
<div class="c" style="left:444.5px;top:400.4px;">87</div>
<div class="p" style="left:39.0px;top:416.8px;">10 .</div>
<div class="p" style="left:52.0px;top:409.8px;">Куприянова</div>
<div class="p" style="left:52.0px;top:416.8px;">Валентина</div>
<div class="p" style="left:52.0px;top:423.8px;">Евгеньевна</div>
<div class="c" style="left:109.0px;top:412.8px;">0000-</div>
<div class="c" style="left:109.0px;top:420.8px;">00009</div>
<div class="p" style="left:141.2px;top:413.2px;">Главный</div>
<div class="p" style="left:141.2px;top:420.2px;">администратор</div>
<div class="c" style="left:196.3px;top:411.6px;">7</div>
<div class="c" style="left:196.3px;top:422.7px;">Я</div>
<div class="c" style="left:212.3px;top:411.6px;">7</div>
<div class="c" style="left:212.3px;top:422.7px;">Я</div>
<div class="c" style="left:228.3px;top:411.6px;">7</div>
<div class="c" style="left:228.3px;top:422.7px;">Я</div>
<div class="c" style="left:244.3px;top:411.6px;">7</div>
<div class="c" style="left:244.3px;top:422.7px;">Я</div>
<div class="c" style="left:260.3px;top:411.6px;">5</div>
<div class="c" style="left:260.3px;top:422.7px;">Я</div>
<div class="c" style="left:276.3px;top:422.7px;">В</div>
<div class="c" style="left:292.3px;top:411.6px;">7</div>
<div class="c" style="left:292.3px;top:422.7px;">Я</div>
<div class="c" style="left:308.3px;top:411.6px;">7</div>
<div class="c" style="left:308.3px;top:422.7px;">Я</div>
<div class="c" style="left:324.3px;top:411.6px;">7</div>
<div class="c" style="left:324.3px;top:422.7px;">Я</div>
<div class="c" style="left:340.3px;top:411.6px;">7</div>
<div class="c" style="left:340.3px;top:422.7px;">Я</div>
<div class="c" style="left:356.3px;top:411.6px;">7</div>
<div class="c" style="left:356.3px;top:422.7px;">Я</div>
<div class="c" style="left:372.3px;top:411.6px;">5</div>
<div class="c" style="left:372.3px;top:422.7px;">Я</div>
<div class="c" style="left:388.3px;top:422.7px;">В</div>
<div class="c" style="left:404.3px;top:411.6px;">7</div>
<div class="c" style="left:404.3px;top:422.7px;">Я</div>
<div class="c" style="left:420.3px;top:411.6px;">7</div>
<div class="c" style="left:420.3px;top:422.7px;">Я</div>
<div class="c" style="left:444.5px;top:411.6px;">13</div>
<div class="c" style="left:444.5px;top:422.7px;">87</div>
<div class="p" style="left:39.0px;top:439.0px;">11 .</div>
<div class="p" style="left:52.0px;top:432.0px;">Семенова</div>
<div class="p" style="left:52.0px;top:439.0px;">Ирина</div>
<div class="p" style="left:52.0px;top:446.0px;">Петровна</div>
<div class="c" style="left:109.0px;top:435.0px;">0000-</div>
<div class="c" style="left:109.0px;top:443.0px;">00011</div>
<div class="p" style="left:141.2px;top:432.0px;">Артист - солист</div>
<div class="p" style="left:141.2px;top:439.0px;">- ведущий</div>
<div class="p" style="left:141.2px;top:446.0px;">мастер сцены</div>
<div class="c" style="left:196.3px;top:433.8px;">7</div>
<div class="c" style="left:196.3px;top:444.9px;">Я</div>
<div class="c" style="left:212.3px;top:433.8px;">7</div>
<div class="c" style="left:212.3px;top:444.9px;">Я</div>
<div class="c" style="left:228.3px;top:433.8px;">7</div>
<div class="c" style="left:228.3px;top:444.9px;">Я</div>
<div class="c" style="left:244.3px;top:433.8px;">7</div>
<div class="c" style="left:244.3px;top:444.9px;">Я</div>
<div class="c" style="left:260.3px;top:433.8px;">5</div>
<div class="c" style="left:260.3px;top:444.9px;">Я</div>
<div class="c" style="left:276.3px;top:444.9px;">В</div>
<div class="c" style="left:292.3px;top:433.8px;">7</div>
<div class="c" style="left:292.3px;top:444.9px;">Я</div>
<div class="c" style="left:308.3px;top:433.8px;">7</div>
<div class="c" style="left:308.3px;top:444.9px;">Я</div>
<div class="c" style="left:324.3px;top:433.8px;">7</div>
<div class="c" style="left:324.3px;top:444.9px;">Я</div>
<div class="c" style="left:340.3px;top:433.8px;">7</div>
<div class="c" style="left:340.3px;top:444.9px;">Я</div>
<div class="c" style="left:356.3px;top:433.8px;">7</div>
<div class="c" style="left:356.3px;top:444.9px;">Я</div>
<div class="c" style="left:372.3px;top:433.8px;">5</div>
<div class="c" style="left:372.3px;top:444.9px;">Я</div>
<div class="c" style="left:388.3px;top:444.9px;">В</div>
<div class="c" style="left:404.3px;top:433.8px;">7</div>
<div class="c" style="left:404.3px;top:444.9px;">Я</div>
<div class="c" style="left:420.3px;top:433.8px;">7</div>
<div class="c" style="left:420.3px;top:444.9px;">Я</div>
<div class="c" style="left:444.5px;top:433.8px;">13</div>
<div class="c" style="left:444.5px;top:444.9px;">87</div>
</div>
</body>
</html>
